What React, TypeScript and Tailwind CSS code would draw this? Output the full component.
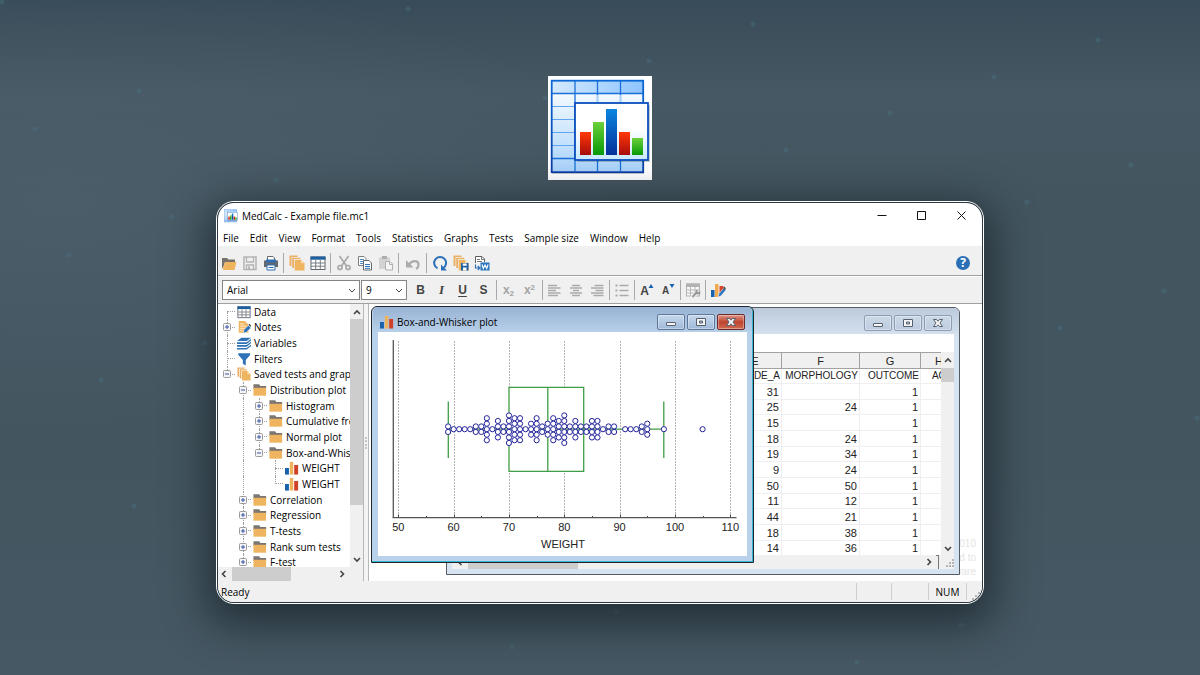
import React from "react";

const specks = [
  [2, 2], [408, 9], [753, 24], [1098, 40], [649, 61], [994, 77], [139, 91], [545, 98], [890, 113], [35, 129],
  [786, 150], [1131, 165], [276, 180], [1027, 202], [172, 217], [69, 255], [1164, 291], [1060, 328], [205, 343],
  [101, 380], [1197, 418], [134, 506], [616, 611], [961, 625], [512, 647], [857, 662],
];

function Logo({ className, id }: { className: string; id: string }) {
  return (
    <svg viewBox="0 0 104 104" className={className} aria-hidden="true">
      <defs>
        <linearGradient id={id + "top"}><stop offset="0" stopColor="#d4e9ff" /><stop offset="1" stopColor="#8ec5ff" /></linearGradient>
        <linearGradient id={id + "cells"} x2="0" y2="1"><stop offset="0" stopColor="#fff" /><stop offset="1" stopColor="#a9d3fb" /></linearGradient>
        <linearGradient id={id + "panel"} x2="0" y2="1"><stop offset="0" stopColor="#fff" /><stop offset=".45" stopColor="#fff" /><stop offset="1" stopColor="#c9e8ff" /></linearGradient>
        <linearGradient id={id + "edge"} x2="0" y2="1"><stop offset="0" stopColor="#0b68d4" /><stop offset="1" stopColor="#0a3da6" /></linearGradient>
        <linearGradient id={id + "r"} x2="0" y2="1"><stop offset="0" stopColor="#ff3a08" /><stop offset="1" stopColor="#a80b0b" /></linearGradient>
        <linearGradient id={id + "g"} x2="0" y2="1"><stop offset="0" stopColor="#6bd03c" /><stop offset="1" stopColor="#069a06" /></linearGradient>
        <linearGradient id={id + "b"} x2="0" y2="1"><stop offset="0" stopColor="#0a86e0" /><stop offset="1" stopColor="#05309a" /></linearGradient>
      </defs>
      <rect width="104" height="104" fill="#fff" />
      <rect x="4" y="95" width="92" height="3" fill="#000" opacity=".18" />
      <rect x="4" y="5" width="91" height="91" fill={`url(#${id}cells)`} />
      <rect x="4" y="5" width="91" height="13" fill={`url(#${id}top)`} />
      <path d="M4 30.500H95M4 43.500H27M4 56.500H27M4 69.500H27" stroke="#5fa6ee" strokeWidth="1.200" />
      <path d="M4 82.500H95M27 5V95M49.500 5V95M72.500 5V95M4 17.500H95" stroke="#1a70d8" strokeWidth="1.300" />
      <path d="M49.500 19V28M72.500 19V28" stroke="#a9d3fb" strokeWidth="1.500" />
      <rect x="3.700" y="4.700" width="91.500" height="91.500" fill="none" stroke={`url(#${id}edge)`} strokeWidth="1.800" />
      <rect x="29" y="29" width="73" height="57" fill="#000" opacity=".2" />
      <rect x="27" y="27" width="73" height="57" fill={`url(#${id}panel)`} stroke="#0a50bd" strokeWidth="1.800" />
      <rect x="32" y="56" width="11" height="23" fill={`url(#${id}r)`} />
      <rect x="45" y="46" width="11" height="33" fill={`url(#${id}g)`} />
      <rect x="58" y="33" width="11" height="46" fill={`url(#${id}b)`} />
      <rect x="71" y="56" width="11" height="23" fill={`url(#${id}r)`} />
      <rect x="84" y="62" width="11" height="17" fill={`url(#${id}g)`} />
    </svg>
  );
}

type IconName =
  | "open" | "save" | "print" | "stack" | "table" | "cut" | "copy" | "paste" | "undo" | "refresh" | "stackSave" | "word"
  | "left" | "center" | "right" | "list" | "grow" | "shrink" | "tableTool" | "chartEdit"
  | "notes" | "layers" | "filter" | "folder" | "bars";

const stackShape = (
  <>
    <path d="M.5.5h8v1.500H2.500V11h-2z" fill="#e9b066" />
    <path d="M3.200 2.700h8v1.300H5V13H3.200z" fill="#e9b066" />
    <path d="M5.700 4.700h6.300l3.500 3.600V15.500H5.700z" fill="#efb45f" />
    <path d="M12 4.700 15.500 8.300H12z" fill="#f8ddb0" />
  </>
);

const icons: Record<IconName, React.ReactNode> = {
  open: (
    <>
      <path d="M1 3h5l1.500 1.500H14V7H4L2 13H1z" fill="#77716c" />
      <path d="M4.300 7H15.500L13.500 15H1.500z" fill="#f0b45e" />
    </>
  ),
  save: (
    <>
      <path d="M2 2h12v12.500H2z" fill="none" stroke="#b3b3b3" strokeWidth="1.500" />
      <path d="M4.500 2v5h7V2M4.500 14.500V10h7v4.500" fill="none" stroke="#b3b3b3" strokeWidth="1.300" />
      <path d="M6 11.500h2V14H6z" fill="#b3b3b3" />
    </>
  ),
  print: (
    <>
      <path d="M4.500 5V1.500H10l1.500 1.500V5" fill="#fff" stroke="#6a6a6a" />
      <path d="M1 5.500h14V12H1z" fill="#65696d" />
      <path d="M3 4.500h10v3H3z" fill="#2f6fb5" />
      <path d="M4 10h8v5H4z" fill="#fff" stroke="#2f6fb5" />
      <path d="M5.500 12.500h5" stroke="#2f6fb5" />
    </>
  ),
  stack: stackShape,
  table: (
    <>
      <rect x="1" y="2" width="14" height="12.500" fill="#fff" stroke="#646a70" />
      <rect x=".5" y="1.500" width="15" height="3.200" fill="#1f5f9f" />
      <path d="M1 8h14M1 11.200h14M5.700 5v9.500M10.300 5v9.500" stroke="#777d84" />
    </>
  ),
  cut: (
    <g fill="none" stroke="#a9a9a9" strokeWidth="1.700">
      <path d="M3.500 1 10.500 11M12.500 1 5.500 11" />
      <circle cx="4" cy="12.500" r="2" />
      <circle cx="12" cy="12.500" r="2" />
    </g>
  ),
  copy: (
    <>
      <path d="M1.500 1.500h5.500l2 2V10.500H1.500z" fill="#fff" stroke="#7b8085" />
      <path d="M3 4.500h4M3 6.500h4M3 8.500h4" stroke="#4f8ec9" />
      <path d="M6.500 5.500H12l2.500 2.500V15H6.500z" fill="#fff" stroke="#646a70" />
      <path d="M8 9.500h5M8 11.500h5M8 13.300h5" stroke="#2f78bd" />
    </>
  ),
  paste: (
    <>
      <path d="M1 2.500h11V8H7v6H1z" fill="#d3d3d3" />
      <path d="M4 1h5v3H4z" fill="#adadad" />
      <path d="M7.500 6.500H12l2.500 2.500v6h-7z" fill="#f4f4f4" stroke="#b0b0b0" />
      <path d="M11.500 6.500V9.500h3" fill="none" stroke="#b0b0b0" />
    </>
  ),
  undo: (
    <>
      <path d="M4 9.500C7 5 13.500 5 13.500 10c0 1.500-.8 3-2.500 4" fill="none" stroke="#acacac" strokeWidth="2.200" />
      <path d="M1 5v7.500h7.500z" fill="#acacac" />
    </>
  ),
  refresh: (
    <>
      <path d="M5.500 13.300A6 6 0 1 1 11.300 13" fill="none" stroke="#2d72b8" strokeWidth="2" />
      <path d="M9 9.500v6h6z" fill="#2d72b8" />
    </>
  ),
  stackSave: (
    <>
      {stackShape}
      <path d="M8 8h7.500v7.500H8z" fill="#1f5f9f" />
      <path d="M9.700 8.500h4v2.200h-4zM10 12.500h3.500v3H10z" fill="#fff" />
    </>
  ),
  word: (
    <>
      <path d="M1.500 8V1.500H8L10.500 4v3" fill="#fff" stroke="#5d6165" />
      <path d="M7.500 1.500V4.500h3M3 4.500h3M3 6.500h5" fill="none" stroke="#777" />
      <path d="M1.500 9.500v3.500h4M3.800 11l2 2-2 2" fill="none" stroke="#2f6fb5" strokeWidth="1.200" />
      <path d="M6.500 7.500h9v8h-9z" fill="#2874bd" />
      <path d="m8 9.500 1.300 4 1.700-3.500 1.700 3.500 1.300-4" fill="none" stroke="#fff" strokeWidth="1.200" />
    </>
  ),
  left: <path d="M1 3.500h9M1 6h12.500M1 8.500h8M1 11h12.500M1 13.500h10" stroke="#aaa" strokeWidth="1.300" />,
  center: <path d="M4 3.500h8M2 6h12M5 8.500h6M2 11h12M4 13.500h8" stroke="#aaa" strokeWidth="1.300" />,
  right: <path d="M5.500 3.500h9M2 6h12.500M6.500 8.500h8M2 11h12.500M4.500 13.500h10" stroke="#aaa" strokeWidth="1.300" />,
  list: (
    <>
      <path d="M5.500 3.500h9M5.500 8.500h9M5.500 13.500h9" stroke="#aaa" strokeWidth="1.300" />
      <path d="M1.500 2.500h2v2h-2zM1.500 7.500h2v2h-2zM1.500 12.500h2v2h-2z" fill="#aaa" />
    </>
  ),
  grow: <path d="M9.500 6 12 2l2.500 4z" fill="#1761ad" />,
  shrink: <path d="M9.500 2h5L12 6z" fill="#1761ad" />,
  tableTool: (
    <>
      <rect x="1.500" y="2" width="13" height="12" fill="#f8f8f8" stroke="#b2b2b2" />
      <path d="M1 1.500h14V5H1z" fill="#b2b2b2" />
      <path d="M1.500 8h13M1.500 11h13M5.500 5v9M10 5v9" stroke="#b8b8b8" />
      <path d="m7 15.500 5-5.500" stroke="#f0f0f0" strokeWidth="4" />
      <path d="m7.500 15 4-4.500" stroke="#999" strokeWidth="2" />
      <path d="M15.500 9.500a2.500 2.500 0 1 1-3-2v2l1.500.7z" fill="#999" />
    </>
  ),
  chartEdit: (
    <>
      <path d="M1 8h3.500v7H1z" fill="#1761ad" />
      <path d="M5 2h3.500v13H5z" fill="#f0a94c" />
      <path d="M9.500 4h4v3l-4 4z" fill="#d8472c" />
      <path d="m8 15 1-3.500L14 6l2 2L10.800 14z" fill="#2874bd" stroke="#fff" strokeWidth=".5" />
      <path d="m13 6 1.300-1.500 1.700 1.700L15 8z" fill="#555" />
    </>
  ),
  notes: (
    <>
      <path d="M2 1h7l4 4v9.500H2z" fill="#efb45f" />
      <path d="M3.500 4.500h5M3.500 7h7M3.500 9.500h5M3.500 12h3" stroke="#fff3dc" />
      <path d="m7 15 1-4 5-5 3 3-5.200 5z" fill="#2d72b8" stroke="#fff" strokeWidth=".7" />
      <path d="m13 5.500 1.200-1.200 2 2L15.500 8z" fill="#555" />
    </>
  ),
  layers: (
    <g fill="#2d72b8">
      <path d="M5 2h11l-5 3.700H0z" />
      <path d="M0 7h11l5-3.700V5l-5 4H0zM0 10.300h11l5-3.700v1.700l-5 4H0zM0 13.600h11l5-3.700v1.700l-5 3.700H0z" />
    </g>
  ),
  filter: <path d="M1.500 1.500h13.500v2L10 9v6.500L6.700 13.500V9L1.500 3.500z" fill="#2d72b8" />,
  folder: (
    <>
      <path d="M.5 1.500H7L8.500 3.500H15v3H.5z" fill="#7d7771" />
      <path d="M.5 5.500H15V14.500H.5z" fill="#efb45f" />
    </>
  ),
  bars: (
    <>
      <path d="M0 8h4.500v7.500H0z" fill="#1761ad" />
      <path d="M5.500 1h4v14.500h-4z" fill="#eeb35f" />
      <path d="M10.500 4.500H15v11h-4.500z" fill="#cf4229" />
    </>
  ),
};

function Icon({ name, className }: { name: IconName; className: string }) {
  return <svg viewBox="0 0 16 16" className={className} aria-hidden="true">{icons[name]}</svg>;
}

function Tool({ label, icon, wide, children }: { label: string; icon?: IconName; wide?: boolean; children?: React.ReactNode }) {
  return (
    <button aria-label={label} title={label} className={`relative flex h-5 shrink-0 items-center justify-center ${wide ? "w-[23px]" : "w-[21px]"}`}>
      {children}
      {icon && <Icon name={icon} className={children ? "absolute inset-0 m-auto size-4" : "size-4"} />}
    </button>
  );
}

function Sep({ wide }: { wide?: boolean }) {
  return (
    <span className={`flex h-5 shrink-0 justify-center ${wide ? "w-[5px]" : "w-1"}`}>
      <span className="w-px bg-[#a9a9a9]" />
    </span>
  );
}

const arrowPaths = { up: "M1 6 4 3l3 3", down: "M1 3l3 3 3-3", left: "M5.500 1l-3 3 3 3", right: "M2.500 1l3 3-3 3" };

function Arrow({ dir, thin }: { dir: keyof typeof arrowPaths; thin?: boolean }) {
  return (
    <svg viewBox="0 0 8 8" className="size-2 shrink-0" aria-hidden="true">
      <path d={arrowPaths[dir]} fill="none" stroke="#444" strokeWidth={thin ? 1 : 1.6} />
    </svg>
  );
}

function Combo({ label, value, options, className }: { label: string; value: string; options: string[]; className: string }) {
  return (
    <label className={`relative flex h-5 items-center border border-[#858585] bg-white ${className}`}>
      <select aria-label={label} defaultValue={value} className="h-full w-full appearance-none bg-transparent pl-1 outline-none">
        {options.map((o) => <option key={o}>{o}</option>)}
      </select>
      <span className="pointer-events-none absolute right-[3px]"><Arrow dir="down" thin /></span>
    </label>
  );
}

type Row = { depth: number; icon: IconName; label: string; toggle?: "+" | "-"; last?: boolean; first?: boolean };

const tree: Row[] = [
  { depth: 0, icon: "table", label: "Data", first: true },
  { depth: 0, icon: "notes", label: "Notes", toggle: "+" },
  { depth: 0, icon: "layers", label: "Variables" },
  { depth: 0, icon: "filter", label: "Filters" },
  { depth: 0, icon: "stack", label: "Saved tests and graphs", toggle: "-", last: true },
  { depth: 1, icon: "folder", label: "Distribution plot", toggle: "-" },
  { depth: 2, icon: "folder", label: "Histogram", toggle: "+" },
  { depth: 2, icon: "folder", label: "Cumulative frequency", toggle: "+" },
  { depth: 2, icon: "folder", label: "Normal plot", toggle: "+" },
  { depth: 2, icon: "folder", label: "Box-and-Whisker", toggle: "-", last: true },
  { depth: 3, icon: "bars", label: "WEIGHT" },
  { depth: 3, icon: "bars", label: "WEIGHT", last: true },
  { depth: 1, icon: "folder", label: "Correlation", toggle: "+" },
  { depth: 1, icon: "folder", label: "Regression", toggle: "+" },
  { depth: 1, icon: "folder", label: "T-tests", toggle: "+" },
  { depth: 1, icon: "folder", label: "Rank sum tests", toggle: "+" },
  { depth: 1, icon: "folder", label: "F-test", toggle: "+" },
];

function TreeRow({ row }: { row: Row }) {
  return (
    <li className="flex min-h-0 items-center whitespace-nowrap">
      {Array.from({ length: row.depth }, (_, d) => (
        <span key={d} className="flex h-full w-4 shrink-0 justify-center">
          {d === 1 && <span className="border-l border-dotted border-[#a0a0a0]" />}
        </span>
      ))}
      <span className="relative flex h-full w-4 shrink-0 items-center justify-center">
        <span className={`absolute left-2 border-l border-dotted border-[#a0a0a0] ${row.first ? "top-1/2 bottom-0" : row.last ? "top-0 bottom-1/2" : "inset-y-0"}`} />
        <span className="absolute right-0 left-2 border-t border-dotted border-[#a0a0a0]" />
        {row.toggle && (
          <button aria-label={(row.toggle === "+" ? "Expand " : "Collapse ") + row.label} className="relative size-2">
            <svg viewBox="0 0 8 8" className="size-2" aria-hidden="true">
              <rect x=".5" y=".5" width="7" height="7" rx="1" fill="#f6f6f6" stroke="#9a9a9a" />
              <path d={row.toggle === "+" ? "M2 4h4M4 2v4" : "M2 4h4"} stroke="#3653a8" />
            </svg>
          </button>
        )}
      </span>
      <Icon name={row.icon} className="ml-[2px] mr-[3px] size-[14px] shrink-0" />
      <span>{row.label}</span>
    </li>
  );
}

function WindowButtons({ active }: { active?: boolean }) {
  const edge = active ? "border-[#5f7897] bg-linear-to-b from-[#c6d8ec] to-[#9fb9d8]" : "border-[#8e9db3] bg-linear-to-b from-[#ccd8e6] to-[#bccde0]";
  const close = active ? "border-[#6d2a2a] bg-linear-to-b from-[#dd9586] via-[#c0432f] to-[#cf6a50]" : edge;
  const base = "flex h-4 w-7 items-center justify-center rounded-[2px] border shadow-[inset_0_0_0_1px_rgba(255,255,255,0.35)]";
  return (
    <div className="flex gap-[2px]">
      <button aria-label="Minimize" className={`${base} ${edge}`}>
        <svg viewBox="0 0 12 12" className="size-3"><rect x="1.500" y="6.500" width="9" height="3" rx=".5" fill="#f5f5f5" stroke="#56606e" /></svg>
      </button>
      <button aria-label="Maximize" className={`${base} ${edge}`}>
        <svg viewBox="0 0 12 12" className="size-3"><path d="M1.500 2.500h9v7h-9zM4.500 5v2h3V5z" fillRule="evenodd" fill="#f5f5f5" stroke="#56606e" /></svg>
      </button>
      <button aria-label="Close" className={`${base} ${close}`}>
        <svg viewBox="0 0 12 12" className="size-3"><path d="M1.500 2.500h3L6 4.200l1.500-1.700h3L8 6l2.500 3.500h-3L6 7.800 4.500 9.500h-3L4 6z" fill="#f5f5f5" stroke="#56606e" /></svg>
      </button>
    </div>
  );
}

const counts: [number, number][] = [
  [59, 2], [60, 1], [61, 1], [62, 1], [63, 1], [64, 2], [65, 2], [66, 5], [67, 1], [68, 4], [69, 2], [70, 6], [71, 5],
  [72, 5], [73, 1], [74, 3], [75, 5], [76, 2], [77, 3], [78, 5], [79, 4], [80, 6], [81, 2], [82, 4], [83, 2], [84, 2],
  [85, 4], [86, 4], [87, 1], [88, 2], [89, 2], [91, 1], [92, 1], [93, 1], [94, 2], [95, 3], [98, 1], [105, 1],
];
const px = (v: number) => 20.3 + (v - 50) * 5.533;

function BoxPlot() {
  return (
    <svg viewBox="0 0 369 224" className="block w-full bg-white font-['Liberation_Sans',sans-serif]" role="img" aria-label="Box-and-Whisker plot of WEIGHT">
      {[50, 60, 70, 80, 90, 100, 110].map((v) => (
        <g key={v}>
          <path d={`M${Math.round(px(v)) + 0.5} 9V185`} stroke="#b4b4b4" strokeDasharray="2 1" />
          <path d={`M${Math.round(px(v)) + 0.5} 182.500V186`} stroke="#444" />
          <text x={px(v)} y="199" textAnchor="middle" fontSize="11" fill="#222">{v}</text>
        </g>
      ))}
      {[55, 65, 75, 85, 95, 105].map((v) => <path key={v} d={`M${Math.round(px(v)) + 0.5} 184V186`} stroke="#444" />)}
      <path d="M15.300 8V186M14.500 185.700H358.500" stroke="#555" strokeWidth="1.300" fill="none" />
      <g stroke="#3f9d45" strokeWidth="1.300" fill="none">
        <path d="M70 97.200H286M70.300 69.500V126M285.800 69.500V126" />
        <path d="M131 55.300H205.700V139.300H131zM169.800 55.300V139.300" fill="#fff" />
        <path d="M131 97.200H205" />
      </g>
      <g stroke="#23239a" strokeWidth="1" fill="#fff">
        {counts.flatMap(([v, n]) =>
          Array.from({ length: n }, (_, i) => (
            <circle key={`${v}-${i}`} cx={px(v)} cy={97.2 + (i - (n - 1) / 2) * 5.5} r="2.600" />
          )),
        )}
      </g>
      <text x="185" y="216" textAnchor="middle" fontSize="11" fill="#222">WEIGHT</text>
    </svg>
  );
}

const rows = [[31, "", 1], [25, 24, 1], [15, "", 1], [18, 24, 1], [19, 34, 1], [9, 24, 1], [50, 50, 1], [11, 12, 1], [44, 21, 1], [18, 38, 1], [14, 36, 1]];

function Grip() {
  return (
    <svg viewBox="0 0 9 9" className="size-[9px]" aria-hidden="true">
      <path d="M7 1h2v2H7zM4 4h2v2H4zM7 4h2v2H7zM1 7h2v2H1zM4 7h2v2H4zM7 7h2v2H7z" fill="#b5b5b5" />
    </svg>
  );
}

function SheetWindow() {
  return (
    <section aria-label="Data" className="absolute top-[3px] left-[77px] flex h-[268px] w-[514px] flex-col rounded-t-md border border-[#555b63] bg-[#d6e3f1] px-[5px] pb-[5px]">
      <header className="-mx-[5px] flex h-[26px] shrink-0 items-center justify-end rounded-t-[5px] bg-linear-to-b from-[#bccbdc] to-[#d3e0ee] pt-1 pr-[7px]">
        <WindowButtons />
      </header>
      <div className="flex min-h-0 flex-1 flex-col bg-white pt-[18px] font-['Liberation_Sans',sans-serif]">
        <div className="flex min-h-0 flex-1">
          <div className="min-w-0 flex-1 overflow-hidden">
            <table className="w-[505px] table-fixed border-collapse text-[11px] leading-3 text-[#222]">
              <colgroup>
                <col className="w-[276px]" /><col className="w-[53px]" /><col className="w-[78px]" /><col className="w-[61px]" /><col className="w-[37px]" />
              </colgroup>
              <thead>
                <tr className="h-4 bg-[#f0f0f0]">
                  {["", "E", "F", "G", "H"].map((c, i) => <th key={i} className="border border-[#a2a2a2] p-0 text-center font-normal">{c}</th>)}
                </tr>
              </thead>
              <tbody>
                <tr className="h-[15px] text-[10px]">
                  {["", "CODE_A", "MORPHOLOGY", "OUTCOME", "AGE"].map((c, i) => <td key={i} className={`border border-[#efeff1] p-0 text-right ${c === "AGE" ? "pr-1" : "pr-px"}`}>{c}</td>)}
                </tr>
                {rows.map((r, i) => (
                  <tr key={i} className={i % 3 === 1 ? "h-[15px]" : "h-4"}>
                    <td className="border border-[#efeff1] p-0" />
                    {r.map((c, j) => <td key={j} className="border border-[#efeff1] p-0 pr-[2px] text-right">{c}</td>)}
                    <td className="border border-[#efeff1] p-0" />
                  </tr>
                ))}
              </tbody>
            </table>
          </div>
          <div className="flex w-[13px] flex-col items-center justify-between bg-[#f0f0f0] pt-1 pb-[3px]">
            <Arrow dir="up" />
            <span className="mt-1 h-[14px] w-full bg-[#cdcdcd]" />
            <span className="flex-1" />
            <Arrow dir="down" />
          </div>
        </div>
        <div className="flex h-[14px] shrink-0 items-center bg-[#f0f0f0] pl-1">
          <Arrow dir="left" />
          <span className="ml-1 h-full w-[110px] bg-[#cdcdcd]" />
          <span className="flex-1" />
          <Arrow dir="right" />
          <span className="mr-[6px] ml-[3px] h-full w-[3px] border-t border-r border-[#777]" />
          <Grip />
        </div>
      </div>
    </section>
  );
}

function ChartWindow() {
  return (
    <section aria-label="Box-and-Whisker plot" className="absolute top-[2px] left-[2px] w-[383px] rounded-t-md border border-[#20262c] bg-[#b9d1ea] px-[6px] pb-[6px] shadow-[inset_-1px_-1px_0_0_#35b8d6]">
      <header className="-mx-[5px] flex h-[25px] items-center justify-between rounded-t-[5px] bg-linear-to-b from-[#98b3d3] to-[#b7cfe9] pt-1 pr-[7px] pl-1">
        <h2 className="flex items-center gap-[3px] pt-px">
          <Icon name="bars" className="ml-[3px] size-[14px]" />
          Box-and-Whisker plot
        </h2>
        <WindowButtons active />
      </header>
      <BoxPlot />
    </section>
  );
}

const menus = ["File", "Edit", "View", "Format", "Tools", "Statistics", "Graphs", "Tests", "Sample size", "Window", "Help"];

export default function App() {
  return (
    <main className="relative flex min-h-screen flex-col items-center overflow-hidden bg-[#465964] bg-[radial-gradient(ellipse_at_5%_30%,rgba(83,101,114,0.5),transparent_35%),linear-gradient(to_bottom,#384b58_0%,#465863_14%,#43555f_30%,#43555f_65%,#465863_100%)] pt-[76px] pb-[71px] font-['Open_Sans','Noto_Sans',sans-serif] text-[10px] leading-3 text-black">
      <svg viewBox="0 0 1200 675" preserveAspectRatio="xMidYMid slice" className="absolute inset-0 h-full w-full" aria-hidden="true">
        {specks.map(([x, y]) => <circle key={x} cx={x} cy={y} r="2.500" fill="#4a7485" opacity=".4" />)}
      </svg>
      <Logo id="brand" className="relative size-[104px] shrink-0" />
      <div className="relative mt-[21px] w-[64%] min-w-[768px] rounded-[18px] border border-white shadow-[0_12px_40px_10px_rgba(15,25,32,0.6)]">
        <div className="flex flex-col overflow-hidden rounded-[17px] border border-[#2c3740] bg-white">
          <header className="flex h-[25px] items-center justify-between pr-[14px] pl-[6px]">
            <h1 className="flex items-center gap-1">
              <Logo id="app" className="size-[14px]" />
              MedCalc - Example file.mc1
            </h1>
            <div className="flex gap-7">
              <button aria-label="Minimize"><svg viewBox="0 0 12 12" className="size-3"><path d="M1.500 5.500h9" stroke="#111" /></svg></button>
              <button aria-label="Maximize"><svg viewBox="0 0 12 12" className="size-3"><path d="M1.500 1.500h8v8h-8z" fill="none" stroke="#111" /></svg></button>
              <button aria-label="Close"><svg viewBox="0 0 12 12" className="size-3"><path d="m1.500 1.500 8 8m0-8-8 8" stroke="#111" /></svg></button>
            </div>
          </header>
          <nav aria-label="Main menu" className="flex h-[18px] items-center gap-[11px] pt-px pl-[5px]">
            {menus.map((m) => <button key={m}>{m}</button>)}
          </nav>
          <div role="toolbar" aria-label="Standard" className="flex h-[30px] items-center border-b border-[#a0a0a0] bg-[#f0f0f0] pt-1 pr-3">
            <Tool label="Open" icon="open" /><Tool label="Save" icon="save" /><Tool label="Print" icon="print" />
            <Sep wide />
            <Tool label="Contents" icon="stack" /><Tool label="Spreadsheet" icon="table" />
            <Sep wide />
            <Tool label="Cut" icon="cut" /><Tool label="Copy" icon="copy" /><Tool label="Paste" icon="paste" />
            <Sep wide />
            <Tool label="Undo" icon="undo" wide />
            <Sep wide />
            <Tool label="Recalculate" icon="refresh" /><Tool label="Save graph" icon="stackSave" /><Tool label="Export to Word" icon="word" />
            <button aria-label="Help" className="ml-auto flex size-[14px] items-center justify-center rounded-full bg-[#2a6fb5] text-xs leading-none font-bold text-white">?</button>
          </div>
          <div role="toolbar" aria-label="Formatting" className="flex h-[28px] items-center border-t border-b border-t-white border-b-[#a0a0a0] bg-[#f0f0f0] pl-1">
            <Combo label="Font" value="Arial" options={["Arial", "Courier New", "Times New Roman"]} className="mr-px w-[138px]" />
            <Combo label="Font size" value="9" options={["8", "9", "10", "12"]} className="mr-[3px] w-[46px]" />
            <Tool label="Bold"><b className="font-['Liberation_Sans',sans-serif] text-xs text-[#444]">B</b></Tool>
            <Tool label="Italic"><b className="font-['Liberation_Serif',serif] text-[13px] text-[#444] italic">I</b></Tool>
            <Tool label="Underline"><b className="font-['Liberation_Sans',sans-serif] text-xs text-[#444] underline underline-offset-2">U</b></Tool>
            <Tool label="Shadow"><b className="font-['Liberation_Sans',sans-serif] text-xs text-[#444]">S</b></Tool>
            <Sep />
            <Tool label="Subscript"><b className="font-['Liberation_Sans',sans-serif] text-xs text-[#a5a5a5]">x<sub className="text-[8px]">2</sub></b></Tool>
            <Tool label="Superscript"><b className="font-['Liberation_Sans',sans-serif] text-xs text-[#a5a5a5]">x<sup className="text-[8px]">2</sup></b></Tool>
            <Sep />
            <Tool label="Align left" icon="left" /><Tool label="Center" icon="center" /><Tool label="Align right" icon="right" />
            <Sep />
            <Tool label="List" icon="list" />
            <Sep />
            <Tool label="Increase font size" icon="grow"><b className="pt-[2px] pr-1 font-['Liberation_Sans',sans-serif] text-xs text-[#444]">A</b></Tool>
            <Tool label="Decrease font size" icon="shrink"><b className="pt-[2px] pr-1 font-['Liberation_Sans',sans-serif] text-[10px] text-[#444]">A</b></Tool>
            <Sep />
            <Tool label="Format spreadsheet" icon="tableTool" />
            <Sep />
            <Tool label="Format graph" icon="chartEdit" />
          </div>
          <div className="flex h-[277px]">
            <aside className="flex w-[145px] shrink-0 flex-col">
              <div className="flex min-h-0 flex-1">
                <div className="min-w-0 flex-1 overflow-hidden">
                  <ul className="grid h-[266px] grid-rows-[repeat(17,1fr)] pl-px">
                    {tree.map((row, i) => <TreeRow key={i} row={row} />)}
                  </ul>
                </div>
                <div className="flex w-[13px] flex-col items-center bg-[#f0f0f0] pt-1 pb-1">
                  <Arrow dir="up" />
                  <span className="mt-[3px] h-[186px] w-full bg-[#cdcdcd]" />
                  <span className="flex-1" />
                  <Arrow dir="down" />
                </div>
              </div>
              <div className="flex h-[14px] items-center bg-[#f0f0f0] pr-[17px] pl-[2px]">
                <Arrow dir="left" />
                <span className="ml-1 h-full w-[59px] bg-[#cdcdcd]" />
                <span className="flex-1" />
                <Arrow dir="right" />
              </div>
            </aside>
            <div className="flex w-[6px] shrink-0 items-center justify-center border-r border-l border-[#b8b8b8] bg-[#f4f4f4]">
              <span className="h-3 border-l-2 border-dotted border-[#c4c4c4]" />
            </div>
            <div className="relative min-w-0 flex-1 overflow-hidden bg-white">
              <p className="absolute right-[6px] bottom-[2px] text-right font-['Liberation_Sans',sans-serif] leading-[14px] text-[#e4e4e4]">
                © 2010<br />Licensed to<br />MedCalc Software
              </p>
              <SheetWindow />
              <ChartWindow />
            </div>
          </div>
          <footer className="flex h-[21px] items-center bg-[#f0f0f0] pl-[3px]">
            <span className="flex-1">Ready</span>
            <span className="h-[17px] w-[35px] border-l border-[#cfcfcf]" />
            <span className="h-[17px] w-[37px] border-l border-[#cfcfcf]" />
            <span className="flex h-[17px] w-[38px] items-center justify-center border-l border-[#cfcfcf]">NUM</span>
            <span className="flex h-[17px] w-[16px] items-end border-l border-[#cfcfcf] pl-1"><Grip /></span>
          </footer>
        </div>
      </div>
    </main>
  );
}
